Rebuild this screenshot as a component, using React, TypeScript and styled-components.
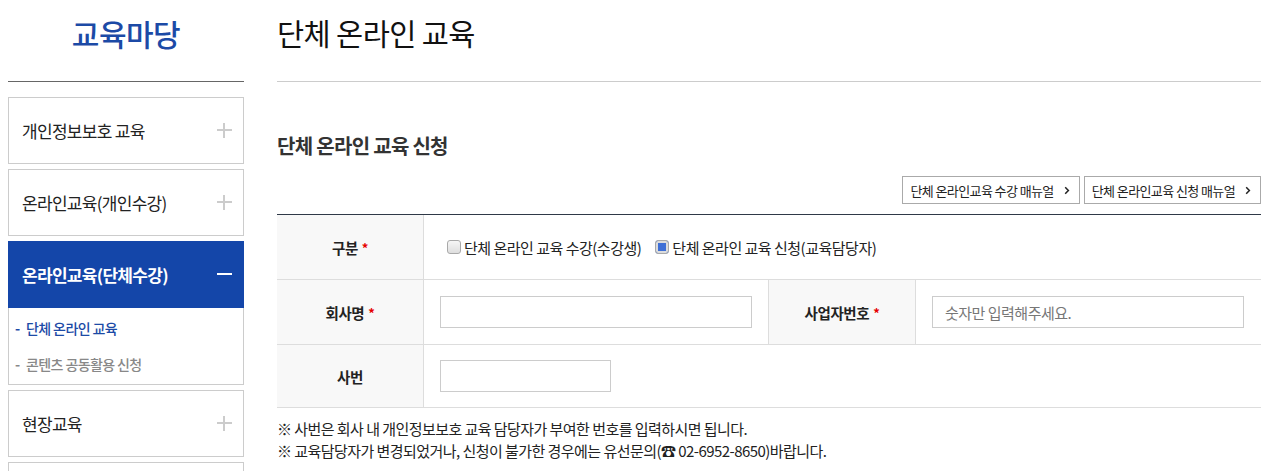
import React from 'react'
import styled, { createGlobalStyle } from 'styled-components'

const GlobalStyle = createGlobalStyle`
  html, body {
    margin: 0;
    padding: 0;
    background: #fff;
  }
  body {
    font-family: 'Noto Sans CJK KR', 'Noto Sans', sans-serif;
    color: #222;
  }
  * {
    box-sizing: border-box;
  }
`

const Page = styled.div`
  display: flex;
  gap: 33px;
  padding: 0 9px 0 8px;
  width: 1270px;
`

const Sidebar = styled.aside`
  width: 236px;
  flex: none;
`

const SideTitle = styled.h2`
  margin: 0;
  height: 82px;
  padding-top: 11px;
  border-bottom: 1px solid #666;
  text-align: center;
  font-size: 30px;
  font-weight: 500;
  color: #1c4aa6;
  letter-spacing: -0.5px;
`

const MenuList = styled.ul`
  list-style: none;
  margin: 15px 0 0;
  padding: 0;
  display: flex;
  flex-direction: column;
  gap: 5px;
`

const MenuGroup = styled.li`
  display: flex;
  flex-direction: column;
`

const MenuHead = styled.div<{ $active?: boolean }>`
  height: 67px;
  display: flex;
  align-items: center;
  justify-content: space-between;
  padding: 0 11px 0 13px;
  border: 1px solid ${(p) => (p.$active ? '#1446a9' : '#ccc')};
  background: ${(p) => (p.$active ? '#1446a9' : '#fff')};
  color: ${(p) => (p.$active ? '#fff' : '#222')};
  font-size: 17px;
  font-weight: ${(p) => (p.$active ? 600 : 400)};
  letter-spacing: -0.7px;
`

const Toggle = styled.span<{ $open?: boolean }>`
  position: relative;
  width: 15px;
  height: 15px;

  &::before,
  &::after {
    content: '';
    position: absolute;
    background: ${(p) => (p.$open ? '#fff' : '#ccc')};
  }
  &::before {
    left: 0;
    top: 6px;
    width: 15px;
    height: 2px;
  }
  &::after {
    display: ${(p) => (p.$open ? 'none' : 'block')};
    left: 6px;
    top: 0;
    width: 2px;
    height: 15px;
  }
`

const SubList = styled.ul`
  list-style: none;
  margin: 0;
  padding: 9px 0 9px 6px;
  border: 1px solid #ccc;
  border-top: none;
  display: flex;
  flex-direction: column;
  gap: 14px;
`

const SubItem = styled.li<{ $current?: boolean }>`
  font-size: 14px;
  line-height: 22px;
  letter-spacing: -0.6px;
  font-weight: 500;
  color: ${(p) => (p.$current ? '#1c4aa6' : '#888')};

  &::before {
    content: '-';
    display: inline-block;
    width: 11px;
    font-weight: 700;
  }
`

const Main = styled.main`
  flex: 1;
  min-width: 0;
`

const PageTitle = styled.h1`
  margin: 0;
  height: 82px;
  padding-top: 11px;
  border-bottom: 1px solid #ccc;
  font-size: 29.5px;
  font-weight: 400;
  color: #111;
  letter-spacing: -0.6px;
`

const SectionTitle = styled.h3`
  margin: 49px 0 0;
  font-size: 20px;
  font-weight: 700;
  color: #333;
  letter-spacing: -0.7px;
  line-height: 30px;
`

const ButtonRow = styled.div`
  display: flex;
  justify-content: flex-end;
  gap: 4px;
  margin-top: 15px;
`

const ManualButton = styled.button`
  height: 28px;
  padding: 0 9px 0 7px;
  border: 1px solid #aaa;
  background: #fff;
  display: flex;
  align-items: center;
  gap: 10px;
  font-family: inherit;
  font-size: 13px;
  color: #222;
  letter-spacing: -0.6px;
  cursor: pointer;
`

const FormGrid = styled.div`
  margin-top: 10px;
  display: grid;
  grid-template-columns: 147px 345px 147px 345px;
  border-top: 1px solid #2f3947;
`

const LabelCell = styled.div<{ $h?: number }>`
  height: ${(p) => p.$h ?? 65}px;
  display: flex;
  align-items: center;
  justify-content: center;
  gap: 4px;
  background: #f8f8f8;
  border-bottom: 1px solid #ddd;
  border-right: 1px solid #ddd;
  font-size: 14.5px;
  font-weight: 700;
  color: #222;
  letter-spacing: -0.4px;
`

const Required = styled.span`
  color: #e60000;
  font-size: 13px;
`

const ValueCell = styled.div<{ $span?: number; $leftLine?: boolean; $h?: number; $pad?: number }>`
  grid-column: span ${(p) => p.$span ?? 1};
  height: ${(p) => p.$h ?? 65}px;
  display: flex;
  align-items: center;
  gap: 14px;
  padding: 0 16px 0 ${(p) => p.$pad ?? 16}px;
  border-bottom: 1px solid #ddd;
  border-right: ${(p) => (p.$leftLine ? '1px solid #ddd' : 'none')};
`

const Check = styled.label`
  display: flex;
  align-items: center;
  gap: 3px;
  font-size: 15px;
  color: #222;
  letter-spacing: -0.5px;
`

const Box = styled.span<{ $checked?: boolean }>`
  width: 14px;
  height: 14px;
  border-radius: 3px;
  border: 1px solid #a9a9a9;
  background: ${(p) => (p.$checked ? '#3e6fd6' : 'linear-gradient(#f6f6f6, #dedede)')};
  box-shadow: ${(p) => (p.$checked ? 'inset 0 0 0 2px #dcdcdc' : 'none')};
`

const TextInput = styled.input<{ $w: number }>`
  width: ${(p) => p.$w}px;
  height: 32px;
  border: 1px solid #ccc;
  padding: 0 12px;
  font-family: inherit;
  font-size: 15px;
  color: #222;
  letter-spacing: -0.5px;
  outline: none;

  &::placeholder {
    color: #777;
  }
`

const Notes = styled.div`
  margin-top: 10px;
  font-size: 15px;
  line-height: 22px;
  color: #222;
  letter-spacing: -0.55px;
`

const menus = [
  { title: '개인정보보호 교육' },
  { title: '온라인교육(개인수강)' },
  {
    title: '온라인교육(단체수강)',
    open: true,
    subs: [
      { name: '단체 온라인 교육', current: true },
      { name: '콘텐츠 공동활용 신청' },
    ],
  },
  { title: '현장교육' },
  { title: '자료실' },
]

const Chevron = () => (
  <svg width="6" height="9" viewBox="0 0 6 9">
    <path d="M1.2 1.2 4.4 4.5 1.2 7.8" fill="none" stroke="#222" strokeWidth="1.5" />
  </svg>
)

const App = () => {
  return (
    <Page>
      <GlobalStyle />
      <Sidebar>
        <SideTitle>교육마당</SideTitle>
        <MenuList>
          {menus.map((m) => (
            <MenuGroup key={m.title}>
              <MenuHead $active={m.open}>
                {m.title}
                <Toggle $open={m.open} />
              </MenuHead>
              {m.subs && (
                <SubList>
                  {m.subs.map((s) => (
                    <SubItem key={s.name} $current={s.current}>
                      {s.name}
                    </SubItem>
                  ))}
                </SubList>
              )}
            </MenuGroup>
          ))}
        </MenuList>
      </Sidebar>

      <Main>
        <PageTitle>단체 온라인 교육</PageTitle>
        <SectionTitle>단체 온라인 교육 신청</SectionTitle>
        <ButtonRow>
          <ManualButton>
            단체 온라인교육 수강 매뉴얼 <Chevron />
          </ManualButton>
          <ManualButton>
            단체 온라인교육 신청 매뉴얼 <Chevron />
          </ManualButton>
        </ButtonRow>

        <FormGrid>
          <LabelCell>
            구분 <Required>*</Required>
          </LabelCell>
          <ValueCell $span={3} $pad={23}>
            <Check>
              <Box />
              단체 온라인 교육 수강(수강생)
            </Check>
            <Check>
              <Box $checked />
              단체 온라인 교육 신청(교육담당자)
            </Check>
          </ValueCell>

          <LabelCell>
            회사명 <Required>*</Required>
          </LabelCell>
          <ValueCell $leftLine>
            <TextInput $w={312} />
          </ValueCell>
          <LabelCell>
            사업자번호 <Required>*</Required>
          </LabelCell>
          <ValueCell>
            <TextInput $w={312} placeholder="숫자만 입력해주세요." />
          </ValueCell>

          <LabelCell $h={63}>사번</LabelCell>
          <ValueCell $span={3} $h={63}>
            <TextInput $w={171} />
          </ValueCell>
        </FormGrid>

        <Notes>
          <div>※ 사번은 회사 내 개인정보보호 교육 담당자가 부여한 번호를 입력하시면 됩니다.</div>
          <div>※ 교육담당자가 변경되었거나, 신청이 불가한 경우에는 유선문의(☎ 02-6952-8650)바랍니다.</div>
        </Notes>
      </Main>
    </Page>
  )
}

export default App
